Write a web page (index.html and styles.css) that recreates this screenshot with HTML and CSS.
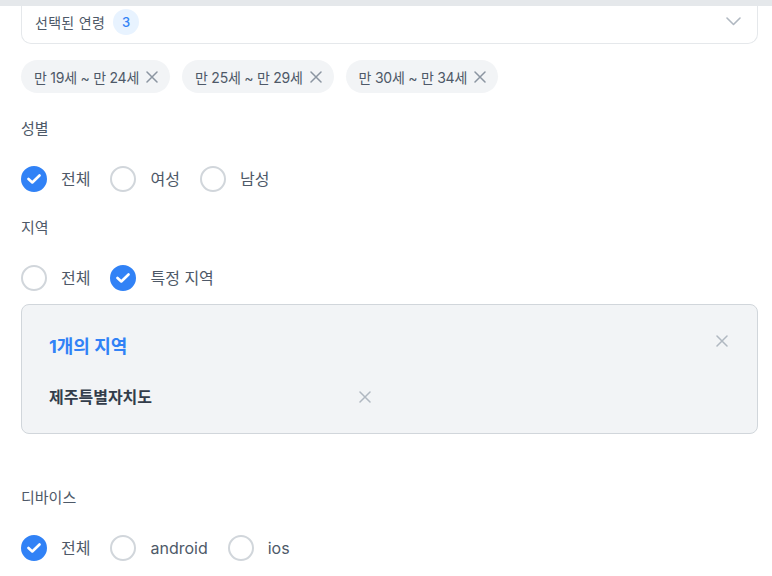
FILE: index.html
```html
<!DOCTYPE html>
<html lang="ko">
<head>
<meta charset="utf-8">
<link rel="stylesheet" href="styles.css">
</head>
<body>
<div class="topbar"></div>
<main class="page">
  <div class="dropdown">
    <span class="dd-label">선택된 연령</span>
    <span class="badge">3</span>
    <svg class="chev" width="15" height="9" viewBox="0 0 15 9"><path d="M1 1l6.5 6.5L14 1" fill="none" stroke="#b0b8c1" stroke-width="1.6" stroke-linecap="round" stroke-linejoin="round"/></svg>
  </div>

  <div class="chips">
    <span class="chip">만 19세 ~ 만 24세 <svg class="x" width="12" height="12" viewBox="0 0 12 12"><path d="M1 1l10 10M11 1L1 11" stroke="#8b95a1" stroke-width="1.5" stroke-linecap="round"/></svg></span>
    <span class="chip">만 25세 ~ 만 29세 <svg class="x" width="12" height="12" viewBox="0 0 12 12"><path d="M1 1l10 10M11 1L1 11" stroke="#8b95a1" stroke-width="1.5" stroke-linecap="round"/></svg></span>
    <span class="chip">만 30세 ~ 만 34세 <svg class="x" width="12" height="12" viewBox="0 0 12 12"><path d="M1 1l10 10M11 1L1 11" stroke="#8b95a1" stroke-width="1.5" stroke-linecap="round"/></svg></span>
  </div>

  <div class="label first">성별</div>
  <div class="radios">
    <label class="radio"><span class="dot on"><svg width="14" height="10" viewBox="0 0 14 10"><path d="M1.5 5l3.8 3.5L12.5 1.5" fill="none" stroke="#fff" stroke-width="2.6" stroke-linecap="round" stroke-linejoin="round"/></svg></span>전체</label>
    <label class="radio"><span class="dot"></span>여성</label>
    <label class="radio"><span class="dot"></span>남성</label>
  </div>

  <div class="label">지역</div>
  <div class="radios">
    <label class="radio"><span class="dot"></span>전체</label>
    <label class="radio"><span class="dot on"><svg width="14" height="10" viewBox="0 0 14 10"><path d="M1.5 5l3.8 3.5L12.5 1.5" fill="none" stroke="#fff" stroke-width="2.6" stroke-linecap="round" stroke-linejoin="round"/></svg></span>특정 지역</label>
  </div>

  <section class="region-box">
    <div class="rb-head">
      <span class="rb-title">1개의 지역</span>
      <svg class="rb-close" width="12" height="12" viewBox="0 0 12 12"><path d="M1 1l10 10M11 1L1 11" stroke="#b0b8c1" stroke-width="1.5" stroke-linecap="round"/></svg>
    </div>
    <div class="rb-item">
      <span>제주특별자치도</span>
      <svg width="12" height="12" viewBox="0 0 12 12"><path d="M1 1l10 10M11 1L1 11" stroke="#b0b8c1" stroke-width="1.5" stroke-linecap="round"/></svg>
    </div>
  </section>

  <div class="label spaced">디바이스</div>
  <div class="radios">
    <label class="radio"><span class="dot on"><svg width="14" height="10" viewBox="0 0 14 10"><path d="M1.5 5l3.8 3.5L12.5 1.5" fill="none" stroke="#fff" stroke-width="2.6" stroke-linecap="round" stroke-linejoin="round"/></svg></span>전체</label>
    <label class="radio"><span class="dot"></span>android</label>
    <label class="radio"><span class="dot"></span>ios</label>
  </div>
</main>
</body>
</html>
```

FILE: styles.css
```css
* { box-sizing: border-box; }
html, body { margin: 0; padding: 0; background: #fff; }
body {
  font-family: Inter, "Noto Sans CJK KR", sans-serif;
  color: #4e5968;
  overflow: hidden;
}
.topbar {
  position: fixed;
  top: 0; left: 0; right: 0;
  height: 6px;
  background: #e5e8eb;
  z-index: 2;
}
.page {
  padding: 0 14px 0 21px;
}
.dropdown {
  height: 44px;
  border: 1px solid #e5e8eb;
  border-radius: 0 0 10px 10px;
  border-top: none;
  display: flex;
  align-items: center;
  padding: 0 16px 0 13px;
}
.dd-label {
  font-size: 14px;
  color: #4e5968;
  letter-spacing: 0.3px;
}
.badge {
  margin-left: 8px;
  width: 26px;
  height: 26px;
  border-radius: 50%;
  background: #e8f3ff;
  color: #3182f6;
  font-size: 13px;
  font-weight: 500;
  display: flex;
  align-items: center;
  justify-content: center;
}
.chev { margin-left: auto; }
.chips {
  display: flex;
  gap: 12px;
  margin-top: 16px;
}
.chip {
  height: 33px;
  border-radius: 17px;
  background: #f2f4f6;
  display: flex;
  align-items: center;
  gap: 7px;
  padding: 0 12px 0 13px;
  font-size: 14px;
  color: #4e5968;
  letter-spacing: -0.25px;
}
.label {
  font-size: 15px;
  line-height: 22px;
  color: #4e5968;
  margin-top: 25px;
}
.label.first { margin-top: 25px; }
.label.spaced { margin-top: 53px; }
.radios {
  display: flex;
  margin-top: 26px;
  gap: 20px;
}
.radio {
  display: flex;
  align-items: center;
  gap: 14px;
  font-size: 16px;
  color: #4e5968;
  line-height: 26px;
}
.dot {
  width: 26px;
  height: 26px;
  border-radius: 50%;
  border: 2px solid #d1d6db;
  background: #fff;
  display: flex;
  align-items: center;
  justify-content: center;
}
.dot.on {
  border-color: #3182f6;
  background: #3182f6;
}
.region-box {
  margin-top: 13px;
  border: 1px solid #d1d6db;
  border-radius: 8px;
  background: #f2f4f6;
  padding: 30px 29px 25px 27px;
}
.rb-head {
  display: flex;
  justify-content: space-between;
  align-items: flex-start;
}
.rb-title {
  font-size: 18px;
  line-height: 24px;
  font-weight: 700;
  color: #3182f6;
}
.rb-item {
  margin-top: 27px;
  width: 322px;
  display: flex;
  justify-content: space-between;
  align-items: center;
  font-size: 16px;
  line-height: 22px;
  font-weight: 600;
  color: #333d4b;
}
```
